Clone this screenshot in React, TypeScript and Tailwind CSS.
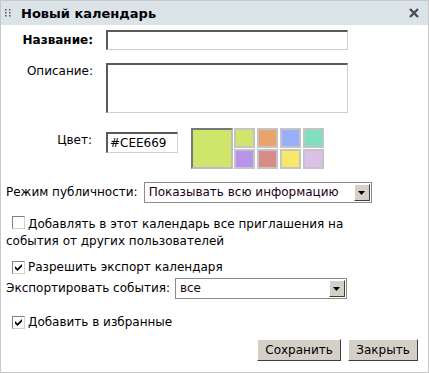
import React from "react";

const swatches = [
  "#d0e56c",
  "#e8a46c",
  "#99aef7",
  "#80dfc1",
  "#b793ea",
  "#d98c85",
  "#f7e86a",
  "#dcc0e8",
];

function Checkbox({ checked }: { checked?: boolean }) {
  return (
    <span className="inline-flex items-center justify-center w-[13px] h-[13px] border border-t-[#808080] border-l-[#808080] border-b-[#d4d0c8] border-r-[#d4d0c8] bg-white align-[-1px] mr-[3px]">
      {checked && (
        <svg width="9" height="9" viewBox="0 0 9 9">
          <path d="M1 3 L3.5 5.5 L8 1 L8 3.5 L3.5 8 L1 5.5 Z" fill="#000" />
        </svg>
      )}
    </span>
  );
}

function Select({ value, width }: { value: string; width: string }) {
  return (
    <div className={`${width} h-[21px] flex items-center border border-[#8c8c8c] bg-white`}>
      <span className="flex-1 pl-[4px] text-[#1c001c] truncate">{value}</span>
      <span className="w-[16px] h-[17px] mr-[1px] flex items-center justify-center bg-[#d4d0c8] border border-t-white border-l-white border-b-[#404040] border-r-[#404040]">
        <svg width="7" height="4" viewBox="0 0 7 4">
          <path d="M0 0 H7 L3.5 4 Z" fill="#000" />
        </svg>
      </span>
    </div>
  );
}

export default function App() {
  return (
    <div className="w-[429px] h-[373px] bg-white border border-[#c8c8c8] text-[12px] text-black font-['DejaVu_Sans',Verdana,sans-serif] leading-[17px]">
      {/* Header */}
      <div className="h-[24px] bg-[#d9e3e8] flex items-center pl-[4px] pr-[9px]">
        <svg width="6" height="8" viewBox="0 0 6 8" className="mr-[10px]">
          {[0, 3, 6].map((y) =>
            [0, 4].map((x) => <rect key={`${x}-${y}`} x={x} y={y} width="1.5" height="1.5" fill="#555" />)
          )}
        </svg>
        <span className="font-bold text-[13px] flex-1">Новый календарь</span>
        <svg width="10" height="10" viewBox="0 0 10 10">
          <path d="M1 1 L9 9 M9 1 L1 9" stroke="#4d4d4d" strokeWidth="2.4" />
        </svg>
      </div>

      <div className="pl-[4px]">
        {/* Name */}
        <div className="flex items-center mt-[5px]">
          <label className="w-[88px] text-right font-bold">Название:</label>
          <div className="ml-[13px] w-[242px] h-[20px] bg-white border-t-2 border-l-2 border-[#5a5a5a] border-b border-r border-b-[#d4d0c8] border-r-[#d4d0c8]" />
        </div>

        {/* Description */}
        <div className="flex items-start mt-[13px]">
          <label className="w-[88px] text-right">Описание:</label>
          <div className="ml-[13px] w-[242px] h-[50px] bg-white border-t-2 border-l-2 border-[#5a5a5a] border-b border-r border-b-[#d4d0c8] border-r-[#d4d0c8]" />
        </div>

        {/* Color */}
        <div className="flex items-start mt-[15px]">
          <label className="w-[88px] text-right mt-[4px] pr-[1px]">Цвет:</label>
          <div className="ml-[13px] mt-[4px] w-[72px] h-[21px] flex items-center pl-[2px] bg-white border-t-2 border-l-2 border-[#5a5a5a] border-b border-r border-b-[#d4d0c8] border-r-[#d4d0c8]">
            #CEE669
          </div>
          <div className="ml-[13px] w-[42px] h-[41px] bg-[#d0e56c] border-2 border-t-[#787878] border-l-[#787878] border-b-[#bdbdbd] border-r-[#bdbdbd]" />
          <div className="ml-[1px] grid grid-cols-4 gap-x-[2px] gap-y-[1px]">
            {swatches.map((c) => (
              <div key={c} className="w-[21px] h-[20px] border-2 border-[#c4c4c4]" style={{ backgroundColor: c }} />
            ))}
          </div>
        </div>

        {/* Publicity */}
        <div className="flex items-center mt-[13px]">
          <span className="pl-[1px]">Режим публичности:</span>
          <div className="ml-[6px]">
            <Select value="Показывать всю информацию" width="w-[228px]" />
          </div>
        </div>

        {/* Invitations */}
        <p className="mt-[13px] pl-[1px] w-[352px]">
          <span className="ml-[6px]" />
          <Checkbox />
          Добавлять в этот календарь все приглашения на события от других пользователей
        </p>

        {/* Export */}
        <p className="mt-[9px] pl-[7px]">
          <Checkbox checked />
          Разрешить экспорт календаря
        </p>

        <div className="flex items-center mt-[2px]">
          <span className="pl-[1px]">Экспортировать события:</span>
          <div className="ml-[5px]">
            <Select value="все" width="w-[172px]" />
          </div>
        </div>

        {/* Favourites */}
        <p className="mt-[15px] pl-[7px]">
          <Checkbox checked />
          Добавить в избранные
        </p>

        {/* Buttons */}
        <div className="flex justify-end gap-[7px] mt-[8px] pr-[10px]">
          <button className="w-[84px] h-[22px] bg-[#d4d0c8] border border-t-white border-l-white border-b-[#404040] border-r-[#404040] text-[12px]">
            Сохранить
          </button>
          <button className="w-[70px] h-[22px] bg-[#d4d0c8] border border-t-white border-l-white border-b-[#404040] border-r-[#404040] text-[12px]">
            Закрыть
          </button>
        </div>
      </div>
    </div>
  );
}
